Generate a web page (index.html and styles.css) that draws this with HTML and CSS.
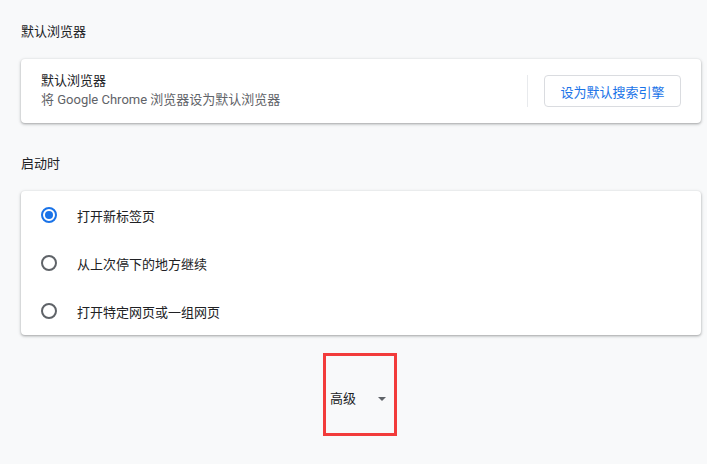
FILE: index.html
```html
<!DOCTYPE html>
<html lang="zh-CN">
<head>
  <meta charset="UTF-8">
  <title>设置</title>
  <link rel="stylesheet" href="styles.css">
</head>
<body>
  <div class="page">
    <h2 class="section-title">默认浏览器</h2>
    <div class="card">
      <div class="row default-row">
        <div class="row-text">
          <div class="row-label">默认浏览器</div>
          <div class="row-sub">将 Google Chrome 浏览器设为默认浏览器</div>
        </div>
        <div class="separator"></div>
        <button class="outline-btn">设为默认搜索引擎</button>
      </div>
    </div>

    <h2 class="section-title startup">启动时</h2>
    <div class="card">
      <label class="radio-row">
        <span class="radio checked"></span>
        <span>打开新标签页</span>
      </label>
      <label class="radio-row">
        <span class="radio"></span>
        <span>从上次停下的地方继续</span>
      </label>
      <label class="radio-row">
        <span class="radio"></span>
        <span>打开特定网页或一组网页</span>
      </label>
    </div>

    <div class="advanced-wrap">
      <div class="advanced">
        <span>高级</span>
        <span class="arrow"></span>
      </div>
    </div>
  </div>
</body>
</html>
```

FILE: styles.css
```css
body {
  margin: 0;
  background: #f8f9fa;
  font-family: Roboto, "Noto Sans CJK SC", sans-serif;
  font-size: 13px;
  color: #202124;
}

.page {
  width: 680px;
  margin-left: 21px;
}

.section-title {
  margin: 0;
  padding-top: 22px;
  font-size: 13px;
  font-weight: normal;
  line-height: 20px;
  margin-bottom: 17px;
}

.section-title.startup {
  padding-top: 31px;
}

.card {
  background: #fff;
  border-radius: 4px;
  box-shadow: 0 1px 2px rgba(60, 64, 67, 0.3), 0 1px 3px 1px rgba(60, 64, 67, 0.15);
}

.default-row {
  display: flex;
  align-items: center;
  height: 64px;
  padding: 0 20px;
}

.row-text {
  flex: 1;
  margin-top: -2px;
}

.row-label {
  line-height: 20px;
}

.row-sub {
  line-height: 18px;
  color: #5f6368;
}

.separator {
  width: 1px;
  height: 32px;
  background: #e8eaed;
  margin-right: 16px;
}

.outline-btn {
  height: 32px;
  width: 137px;
  background: #fff;
  border: 1px solid #dadce0;
  border-radius: 4px;
  color: #1a73e8;
  font-family: inherit;
  font-size: 13px;
  padding: 0;
}

.radio-row {
  display: flex;
  align-items: center;
  height: 48px;
  padding-left: 20px;
}

.radio {
  box-sizing: border-box;
  width: 16px;
  height: 16px;
  border: 2px solid #5f6368;
  border-radius: 50%;
  margin-right: 20px;
  display: flex;
  align-items: center;
  justify-content: center;
}

.radio.checked {
  border-color: #1a73e8;
}

.radio.checked::after {
  content: "";
  width: 8px;
  height: 8px;
  border-radius: 50%;
  background: #1a73e8;
}

.advanced-wrap {
  display: flex;
  justify-content: center;
  padding-top: 18px;
  padding-right: 2px;
}

.advanced {
  box-sizing: border-box;
  width: 74px;
  height: 83px;
  border: 3px solid #f23b3b;
  display: flex;
  align-items: center;
  padding: 6px 0 0 4px;
}

.arrow {
  width: 0;
  height: 0;
  border-left: 4px solid transparent;
  border-right: 4px solid transparent;
  border-top: 4px solid #5f6368;
  margin-left: 22px;
  margin-top: 2px;
}
```
